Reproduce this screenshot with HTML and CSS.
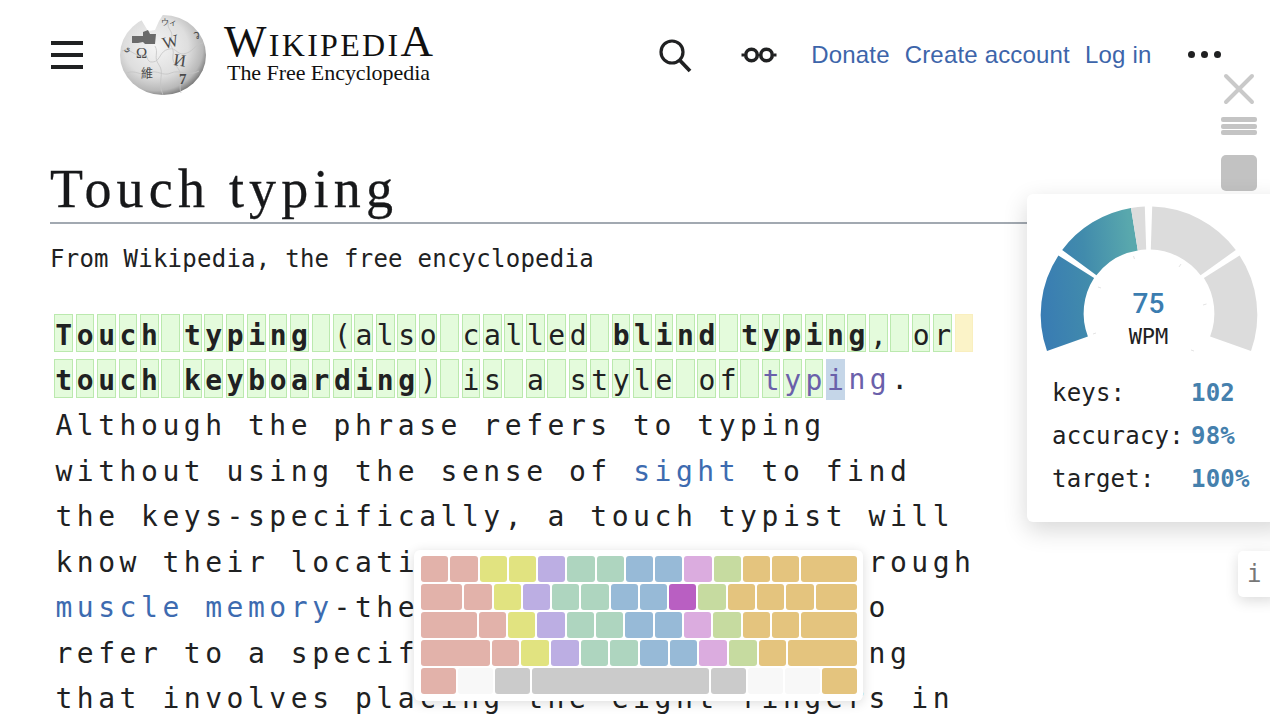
FILE: index.html
```html
<!DOCTYPE html>
<html lang="en">
<head>
<meta charset="utf-8">
<title>Touch typing - Wikipedia</title>
<link rel="stylesheet" href="styles.css">
</head>
<body>
<div class="page">
  <header class="topbar">
    <div class="burger"><span></span><span></span><span></span></div>
    <svg class="globe" width="90" height="84" viewBox="0 0 90 84">
      <defs>
        <radialGradient id="gl" cx="0.42" cy="0.4" r="0.62">
          <stop offset="0" stop-color="#f4f4f4"/><stop offset="0.6" stop-color="#dedede"/><stop offset="0.88" stop-color="#b8b8b8"/><stop offset="1" stop-color="#7e7e7e"/>
        </radialGradient>
      </defs>
      <ellipse cx="44" cy="42" rx="43" ry="40" fill="url(#gl)"/>
      <path d="M20 0 L23 8 L29 18 L36 17 L40 8 L45 0 Z" fill="#fff"/>
      <path d="M13 30 L13 23 L24 23 L24 19 L29 17 L31 21 L37 21 L36 31 L26 31 L24 29 L19 30 Z" fill="#6a6a6a"/>
      <g fill="none" stroke="#c4c4c4" stroke-width="0.8">
        <path d="M3 38 C12 34 14 44 24 42 C30 40 26 50 34 49 C42 48 40 38 50 36 C58 34 58 44 68 40 C74 38 78 30 84 30"/>
        <path d="M36 33 C40 40 34 44 40 52 C46 60 38 68 44 82"/>
        <path d="M50 8 C46 16 56 18 52 26 C48 32 56 34 54 42 C52 52 62 54 62 64 C62 70 60 74 62 80"/>
        <path d="M8 60 C16 56 22 64 30 60 C38 56 44 64 52 60 C60 56 70 64 80 58"/>
      </g>
      <g class="glyphs">
        <text x="17" y="45" class="g-lg">Ω</text>
        <text x="44" y="35" class="g-xl" transform="rotate(-14 50 32)">W</text>
        <text x="54" y="53" class="g-xl" transform="rotate(8 62 52)">И</text>
        <text x="22" y="65" class="g-md">維</text>
        <text x="60" y="71" class="g-lg g-dark">7</text>
        <text x="42" y="12" class="g-sm">ウィ</text>
        <text x="74" y="26" class="g-md">ว</text>
        <text x="5" y="38" class="g-sm">ي</text>
      </g>
    </svg>
    <div class="wordmark">
      <div class="wm-name">WikipediA</div>
      <div class="wm-tag">The Free Encyclopedia</div>
    </div>
    <svg class="i-search" width="34" height="34" viewBox="0 0 34 34">
      <circle cx="13" cy="13" r="11" fill="none" stroke="#202122" stroke-width="3.2"/>
      <path d="M20.5 21 L31 32" stroke="#202122" stroke-width="3.8" fill="none"/>
    </svg>
    <svg class="i-glasses" width="36" height="18" viewBox="0 0 36 18">
      <circle cx="10.5" cy="9" r="5.8" fill="none" stroke="#202122" stroke-width="3.6"/>
      <circle cx="25.5" cy="9" r="5.8" fill="none" stroke="#202122" stroke-width="3.6"/>
      <path d="M0.5 9 H3 M33 9 H35.5" stroke="#202122" stroke-width="3"/>
    </svg>
    <nav class="nav">
      <a class="nav-link">Donate</a>
      <a class="nav-link">Create account</a>
      <a class="nav-link">Log in</a>
    </nav>
    <div class="dots"><span></span><span></span><span></span></div>
  </header>

  <main class="article">
    <h1 class="title">Touch typing</h1>
    <div class="subtitle">From Wikipedia, the free encyclopedia</div>
    <div class="body">
      <div class="row"><span class="b"><span class="c">T</span><span class="c">o</span><span class="c">u</span><span class="c">c</span><span class="c">h</span><span class="c">&nbsp;</span><span class="c">t</span><span class="c">y</span><span class="c">p</span><span class="c">i</span><span class="c">n</span><span class="c">g</span></span><span class="c">&nbsp;</span><span class="c">(</span><span class="c">a</span><span class="c">l</span><span class="c">s</span><span class="c">o</span><span class="c">&nbsp;</span><span class="c">c</span><span class="c">a</span><span class="c">l</span><span class="c">l</span><span class="c">e</span><span class="c">d</span><span class="c">&nbsp;</span><span class="b"><span class="c">b</span><span class="c">l</span><span class="c">i</span><span class="c">n</span><span class="c">d</span><span class="c">&nbsp;</span><span class="c">t</span><span class="c">y</span><span class="c">p</span><span class="c">i</span><span class="c">n</span><span class="c">g</span></span><span class="c">,</span><span class="c">&nbsp;</span><span class="c">o</span><span class="c">r</span><span class="c warn">&nbsp;</span></div>
      <div class="row"><span class="b"><span class="c">t</span><span class="c">o</span><span class="c">u</span><span class="c">c</span><span class="c">h</span><span class="c">&nbsp;</span><span class="c">k</span><span class="c">e</span><span class="c">y</span><span class="c">b</span><span class="c">o</span><span class="c">a</span><span class="c">r</span><span class="c">d</span><span class="c">i</span><span class="c">n</span><span class="c">g</span></span><span class="c">)</span><span class="c">&nbsp;</span><span class="c">i</span><span class="c">s</span><span class="c">&nbsp;</span><span class="c">a</span><span class="c">&nbsp;</span><span class="c">s</span><span class="c">t</span><span class="c">y</span><span class="c">l</span><span class="c">e</span><span class="c">&nbsp;</span><span class="c">o</span><span class="c">f</span><span class="c">&nbsp;</span><span class="c visited">t</span><span class="c visited">y</span><span class="c visited">p</span><span class="c cursor visited">i</span><span class="c plain visited">n</span><span class="c plain visited">g</span><span class="c plain">.</span></div>
      <div class="line">Although the phrase refers to typing</div>
      <div class="line">without using the sense of <a class="link">sight</a> to find</div>
      <div class="line">the keys-specifically, a touch typist will</div>
      <div class="line">know their location on the keyboard through</div>
      <div class="line"><a class="link">muscle memory</a>-the term is often used to</div>
      <div class="line">refer to a specific form of touch typing</div>
      <div class="line">that involves placing the eight fingers in</div>
    </div>
  </main>

  <aside class="tools">
    <svg class="i-close" width="32" height="32" viewBox="0 0 32 32"><path d="M3 3 L29 29 M29 3 L3 29" stroke="#c9c9c9" stroke-width="4" stroke-linecap="round"/></svg>
    <div class="bars"><span></span><span></span><span></span></div>
    <div class="square"></div>
  </aside>

  <section class="stats">
    <div class="gauge">
      <svg width="243" height="170" viewBox="1027 195 243 170">
        <defs>
          <linearGradient id="gr" gradientUnits="userSpaceOnUse" x1="1041" y1="300" x2="1136" y2="290">
            <stop offset="0" stop-color="#397cb3"/><stop offset="0.5" stop-color="#418bac"/><stop offset="1" stop-color="#59a8ad"/>
          </linearGradient>
        </defs>
        <path d="M1047.0 351.0 A108 108 0 0 1 1058.4 255.5 L1094.1 278.0 A65 65 0 0 0 1087.9 336.6 Z" fill="url(#gr)"/>
        <path d="M1062.2 250.0 A108 108 0 0 1 1131.0 208.0 L1137.8 250.4 A65 65 0 0 0 1096.4 275.3 Z" fill="url(#gr)"/>
        <path d="M1131.0 208.0 A108 108 0 0 1 1144.8 206.6 L1146.2 249.6 A65 65 0 0 0 1137.8 250.4 Z" fill="#dcdcdc"/>
        <path d="M1152.2 206.6 A108 108 0 0 1 1235.8 250.0 L1200.6 275.3 A65 65 0 0 0 1150.8 249.6 Z" fill="#dcdcdc"/>
        <path d="M1239.6 255.5 A108 108 0 0 1 1251.0 351.0 L1210.1 336.6 A65 65 0 0 0 1203.9 278.0 Z" fill="#dcdcdc"/>
        <path d="M1133.5 256 L1134.5 259 M1181 264 L1179 267 M1206.5 304 L1203 305 M1191 350 L1194 351 M1093 334 L1096 333 M1098 287 L1101 288" stroke="#e4e4e4" stroke-width="1" fill="none"/>
      </svg>
      <div class="speed">75</div>
      <div class="speed-unit">WPM</div>
    </div>
    <dl class="stat-grid">
      <dt>keys:</dt><dd>102</dd>
      <dt>accuracy:</dt><dd>98%</dd>
      <dt>target:</dt><dd>100%</dd>
    </dl>
  </section>

  <div class="info-tab">i</div>

  <section class="keyboard">
    <div class="kb-row">
      <span class="k u1 red"></span><span class="k u1 red"></span><span class="k u1 yel"></span><span class="k u1 yel"></span><span class="k u1 pur"></span><span class="k u1 grn"></span><span class="k u1 grn"></span><span class="k u1 blu"></span><span class="k u1 blu"></span><span class="k u1 pnk"></span><span class="k u1 lim"></span><span class="k u1 gld"></span><span class="k u1 gld"></span><span class="k u2 gld"></span>
    </div>
    <div class="kb-row">
      <span class="k u15 red"></span><span class="k u1 red"></span><span class="k u1 yel"></span><span class="k u1 pur"></span><span class="k u1 grn"></span><span class="k u1 grn"></span><span class="k u1 blu"></span><span class="k u1 blu"></span><span class="k u1 mag"></span><span class="k u1 lim"></span><span class="k u1 gld"></span><span class="k u1 gld"></span><span class="k u1 gld"></span><span class="k u15 gld"></span>
    </div>
    <div class="kb-row">
      <span class="k u2 red"></span><span class="k u1 red"></span><span class="k u1 yel"></span><span class="k u1 pur"></span><span class="k u1 grn"></span><span class="k u1 grn"></span><span class="k u1 blu"></span><span class="k u1 blu"></span><span class="k u1 pnk"></span><span class="k u1 lim"></span><span class="k u1 gld"></span><span class="k u1 gld"></span><span class="k u2 gld"></span>
    </div>
    <div class="kb-row">
      <span class="k u25 red"></span><span class="k u1 red"></span><span class="k u1 yel"></span><span class="k u1 pur"></span><span class="k u1 grn"></span><span class="k u1 grn"></span><span class="k u1 blu"></span><span class="k u1 blu"></span><span class="k u1 pnk"></span><span class="k u1 lim"></span><span class="k u1 gld"></span><span class="k u25 gld"></span>
    </div>
    <div class="kb-row">
      <span class="k m red"></span><span class="k m emp"></span><span class="k m gry"></span><span class="k sp gry"></span><span class="k m gry"></span><span class="k m emp"></span><span class="k m emp"></span><span class="k m gld"></span>
    </div>
  </section>
</div>
</body>
</html>
```

FILE: styles.css
```css
* { box-sizing: border-box; }
html, body { margin: 0; padding: 0; background: #fff; }
body { overflow: hidden; color: #202122; font-family: "DejaVu Sans Mono", monospace; }
.page { position: relative; width: 1270px; height: 720px; overflow: hidden; background: #fff; }

/* header */
.topbar { display: flex; align-items: center; height: 110px; padding-left: 51px; }
.burger { display: flex; flex-direction: column; gap: 8.7px; width: 32px; }
.burger span { height: 3.3px; background: #202122; }
.globe { margin-left: 36px; flex: none; }
.glyphs text { font-family: "Liberation Serif", "Noto Sans CJK SC", serif; fill: #4a4a4a; }
.g-xl { font-size: 17px; }
.g-lg { font-size: 15px; }
.g-md { font-size: 12px; }
.g-sm { font-size: 8px; }
.g-dark { font-weight: bold; fill: #333; }
.wordmark { margin-left: 15px; margin-top: -4px; font-family: "Liberation Serif", serif; color: #111; }
.wm-name { font-size: 45px; font-variant: small-caps; line-height: 38px; letter-spacing: 2.3px; white-space: nowrap; }
.wm-tag { font-size: 22px; line-height: 24px; margin-left: 3px; margin-top: 1px; letter-spacing: -0.05px; white-space: nowrap; }
.i-search { margin-left: 224px; margin-top: 2px; flex: none; }
.i-glasses { margin-left: 48px; flex: none; }
.nav { display: flex; gap: 15px; margin-left: 34px; font-family: "Liberation Sans", sans-serif; font-size: 24px; letter-spacing: 0.18px; }
.nav-link { color: #3d65aa; }
.dots { display: flex; gap: 6px; margin-left: 37px; margin-top: -2px; }
.dots span { width: 7px; height: 7px; border-radius: 50%; background: #202122; }

/* article */
.article { padding-left: 50px; }
.title { margin: 40px 0 0; font-family: "Liberation Serif", serif; font-weight: 400; font-size: 54px; line-height: 79px; letter-spacing: 5.2px; color: #17181a; border-bottom: 2px solid #a2a9b1; height: 74px; -webkit-text-stroke: 0.3px #17181a; }
.subtitle { margin-top: 19px; font-size: 24px; line-height: 32px; letter-spacing: 0.25px; white-space: nowrap; }
.body { margin-top: 37px; margin-left: 4.3px; font-size: 28px; line-height: 45.5px; color: #202122; }
.row { display: flex; height: 45.5px; padding-top: 1.5px; }
.b { display: flex; font-weight: 700; }
.c { display: block; flex: none; width: 18.7px; height: 38.5px; margin-right: 2.75px; line-height: 42px; text-align: center; background: #e4fbdc; border: 1px solid #bbe9ae; }
.warn { background: #fbf3c8; border-color: #f9efbf; }
.cursor { background: #c5d6e8; border: 0; height: 41px; line-height: 44px; }
.plain { background: none; border: 0; }
.visited { color: #6a60aa; }
.line { padding-left: 1.1px; letter-spacing: 4.54px; white-space: nowrap; }
.link { color: #3d6bb0; }

/* floating tools */
.tools { position: absolute; left: 1221px; top: 73px; display: flex; flex-direction: column; align-items: center; width: 36px; }
.i-close { display: block; }
.bars { display: flex; flex-direction: column; gap: 1.5px; width: 36px; margin-top: 12px; }
.bars span { height: 5px; background: #c4c4c4; border-radius: 2px; }
.square { width: 36px; height: 36px; margin-top: 20px; background: #c2c2c2; border-radius: 5px; }

/* stats panel */
.stats { position: absolute; left: 1027px; top: 194px; width: 260px; height: 328px; padding-top: 1px; background: #fff; border-radius: 6px; box-shadow: 0 8px 24px rgba(0, 0, 0, 0.16); }
.gauge { position: relative; height: 170px; }
.gauge svg { display: block; }
.speed { position: absolute; left: 0; top: 92px; width: 243px; text-align: center; font-family: Roboto, sans-serif; font-weight: 500; font-size: 28px; line-height: 34px; color: #3b7db0; }
.speed-unit { position: absolute; left: 0; top: 128px; width: 243px; text-align: center; font-size: 22px; line-height: 28px; color: #202122; }
.stat-grid { display: grid; grid-template-columns: 139px auto; margin: 7px 0 0 25px; font-size: 24px; line-height: 43px; letter-spacing: 0.2px; justify-content: start; }
.stat-grid dt { margin: 0; }
.stat-grid dd { margin: 0; font-weight: 700; color: #4580ad; }

.info-tab { position: absolute; left: 1238px; top: 551px; width: 40px; height: 46px; padding-left: 9px; background: #fff; border-radius: 5px; box-shadow: 0 4px 14px rgba(0, 0, 0, 0.14); font-size: 24px; line-height: 46px; color: #777; }

/* keyboard */
.keyboard { position: absolute; left: 414px; top: 550px; width: 449px; height: 151px; padding: 6px 6px 0 7px; display: flex; flex-direction: column; gap: 2px; background: #fff; border-radius: 6px; box-shadow: 0 2px 12px rgba(0, 0, 0, 0.14); }
.kb-row { display: flex; gap: 2px; height: 26px; }
.k { display: block; flex-basis: 0; border-radius: 3px; }
.u1 { flex-grow: 27.3; }
.u15 { flex-grow: 41.4; }
.u2 { flex-grow: 55.6; }
.u25 { flex-grow: 68; }
.m { flex-grow: 35; }
.sp { flex-grow: 178; }
.red { background: #e2b2aa; }
.yel { background: #e1e380; }
.pur { background: #bcaee3; }
.grn { background: #aed5bf; }
.blu { background: #97bad7; }
.pnk { background: #dbacdf; }
.lim { background: #c6dba0; }
.gld { background: #e4c47e; }
.mag { background: #b95fc2; }
.gry { background: #cbcbcb; }
.emp { background: #f8f8f8; }
```
